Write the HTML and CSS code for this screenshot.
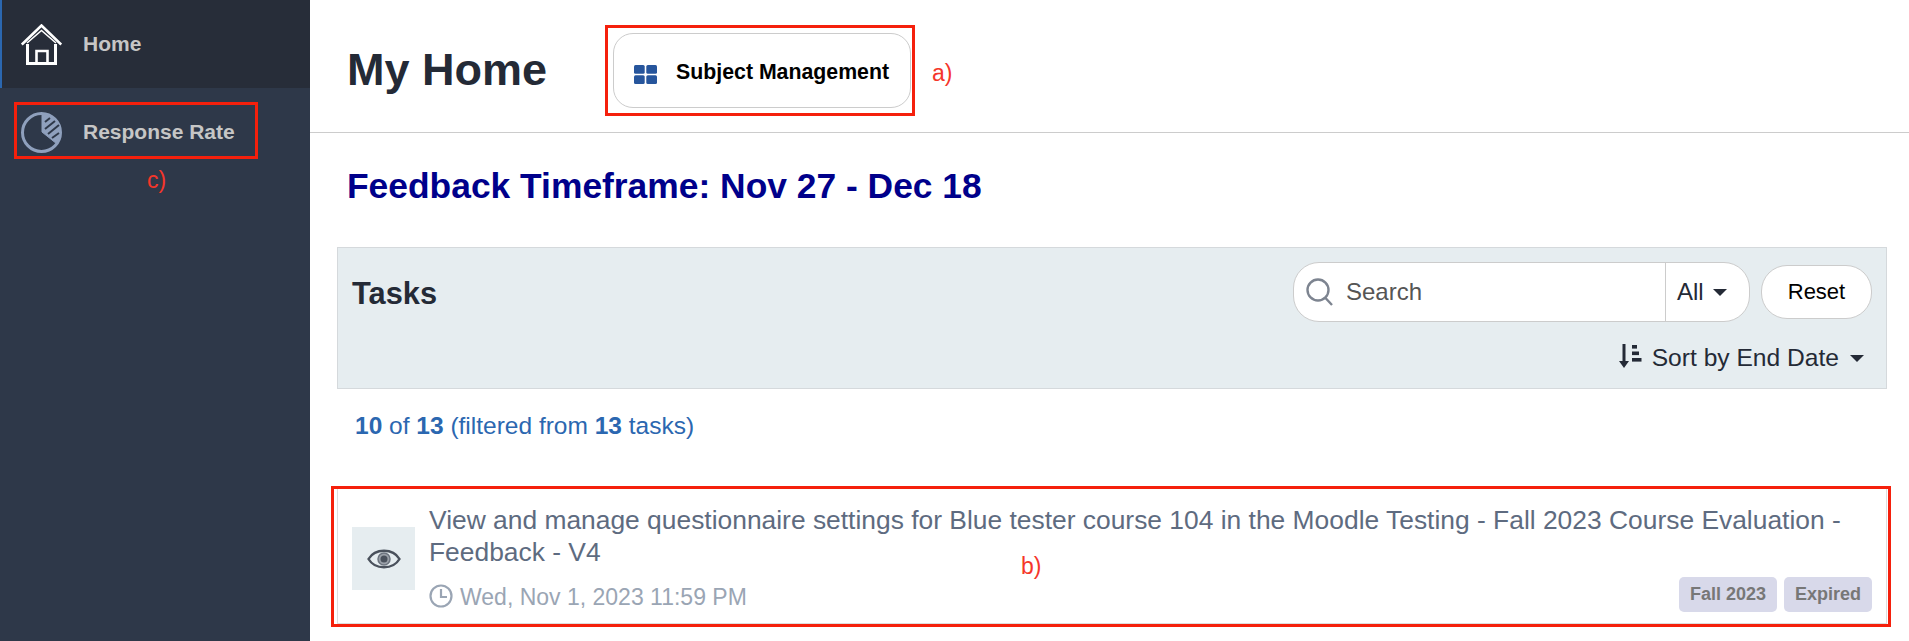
FILE: index.html
```html
<!DOCTYPE html>
<html lang="en">
<head>
    <meta charset="UTF-8">
    <meta name="viewport" content="width=device-width, initial-scale=1.0">
    <title>My Home</title>
    <link rel="stylesheet" href="styles.css">
</head>
<body>
    <aside class="sidebar">
        <a class="nav-item active">
            <svg class="nav-icon" viewBox="0 0 41 41" fill="none" stroke="#fff">
                <path d="M0.8 20.5 L20.5 1.5 L40.2 20.5" stroke-width="2.6"/>
                <path d="M6 19 L20.5 6.5 L35 19" stroke-width="1.6"/>
                <path d="M6.5 20 V39.5 H34.5 V20" stroke-width="3"/>
                <path d="M15.5 39.5 V27 H26.5 V39.5" stroke-width="2.6"/>
            </svg>
            <span>Home</span>
        </a>
        <a class="nav-item">
            <svg class="nav-icon" viewBox="0 0 41 41" fill="none" stroke="#8fa0bd" stroke-width="3">
                <circle cx="20.5" cy="20.5" r="19"/>
                <path d="M21 2 L21 20 L36 32 A19 19 0 0 0 21 2 Z" fill="#8fa0bd" stroke-width="1"/>
                <path d="M24 10 L29 6 M24 17 L34 9 M27 22 L38 13 M31 26 L38 21" stroke="#2e3849" stroke-width="2"/>
            </svg>
            <span>Response Rate</span>
        </a>
    </aside>

    <main class="content">
        <header class="page-header">
            <h1>My Home</h1>
            <button class="subject-btn">
                <svg class="grid-icon" viewBox="0 0 23 19" fill="#26559c">
                    <rect x="0" y="0" width="10.7" height="8.7" rx="1.5"/>
                    <rect x="12.3" y="0" width="10.7" height="8.7" rx="1.5"/>
                    <rect x="0" y="10.3" width="10.7" height="8.7" rx="1.5"/>
                    <rect x="12.3" y="10.3" width="10.7" height="8.7" rx="1.5"/>
                </svg>
                Subject Management
            </button>
        </header>

        <h2 class="timeframe">Feedback Timeframe: Nov 27 - Dec 18</h2>

        <section class="toolbar">
            <div class="toolbar-top">
                <h3>Tasks</h3>
                <div class="toolbar-controls">
                    <div class="search-box">
                        <svg class="search-icon" viewBox="0 0 30 30" fill="none" stroke="#7d8490" stroke-width="2.4">
                            <circle cx="13" cy="13" r="10.5"/>
                            <path d="M20.5 21 L27 28"/>
                        </svg>
                        <span class="search-text">Search</span>
                        <div class="search-filter">All <i class="caret"></i></div>
                    </div>
                    <button class="reset-btn">Reset</button>
                </div>
            </div>
            <div class="sort-row">
                <svg class="sort-icon" viewBox="0 0 24 24" fill="#242a36">
                    <path d="M4.5 0 H7.5 V17 H11 L6 24 L1 17 H4.5 Z"/>
                    <rect x="14" y="1" width="5" height="3.6"/>
                    <rect x="14" y="7.5" width="7" height="3.6"/>
                    <rect x="14" y="14" width="9.5" height="3.6"/>
                </svg>
                <span>Sort by End Date</span>
                <i class="caret"></i>
            </div>
        </section>

        <p class="task-count"><b>10</b> of <b>13</b> (filtered from <b>13</b> tasks)</p>

        <article class="task-card">
            <div class="task-thumb">
                <svg class="eye-icon" viewBox="0 0 34 24" fill="none" stroke="#4a515c" stroke-width="2.4">
                    <path d="M1.5 12 C8 1 26 1 32.5 12 C26 23 8 23 1.5 12 Z"/>
                    <circle cx="17" cy="12" r="6" fill="#9aa0a8" stroke="#6d747f" stroke-width="1.5"/>
                    <circle cx="17" cy="12" r="3.5" fill="#4a515c" stroke="none"/>
                </svg>
            </div>
            <div class="task-body">
                <div class="task-title">View and manage questionnaire settings for Blue tester course 104 in the Moodle Testing - Fall 2023 Course Evaluation - Feedback - V4</div>
                <div class="task-meta">
                    <div class="task-date">
                        <svg class="clock-icon" viewBox="0 0 24 24" fill="none" stroke="#9aa5b4" stroke-width="2.2">
                            <circle cx="12" cy="12" r="10.5"/>
                            <path d="M12 5 V13 H18"/>
                        </svg>
                        Wed, Nov 1, 2023 11:59 PM
                    </div>
                    <div class="task-tags">
                        <span class="tag">Fall 2023</span>
                        <span class="tag">Expired</span>
                    </div>
                </div>
            </div>
        </article>
    </main>

    <!-- red review marks drawn on top of the page -->
    <div class="mark mark-a"></div>
    <div class="mark mark-b"></div>
    <div class="mark mark-c"></div>
    <span class="mark-label label-a">a)</span>
    <span class="mark-label label-b">b)</span>
    <span class="mark-label label-c">c)</span>
</body>
</html>
```

FILE: styles.css
```css
* {
    box-sizing: border-box;
}
html, body {
    height: 100%;
}
body {
    margin: 0;
    display: flex;
    position: relative;
    overflow: hidden;
    font-family: "Liberation Sans", Arial, sans-serif;
    background: #fff;
    color: #242a36;
}
.sidebar {
    width: 310px;
    flex: 0 0 310px;
    background: #2e3849;
}
.nav-item {
    display: flex;
    align-items: center;
    height: 88px;
    padding-left: 21px;
    gap: 21px;
    color: #c6c6c6;
    font-size: 21px;
    font-weight: 700;
}
.nav-item.active {
    background: #272d39;
    border-left: 2px solid #2b67b0;
    padding-left: 19px;
}
.nav-icon {
    width: 41px;
    height: 41px;
}
.content {
    flex: 1;
    min-width: 0;
}
.page-header {
    display: flex;
    align-items: flex-start;
    height: 133px;
    padding: 33px 0 0 37px;
    border-bottom: 1px solid #ccc;
}
.page-header h1 {
    margin: 0;
    font-size: 45px;
    line-height: 73px;
}
.subject-btn {
    display: flex;
    align-items: center;
    gap: 19px;
    width: 298px;
    height: 75px;
    margin-left: 66px;
    padding: 4px 0 0 20px;
    background: #fff;
    border: 1px solid #ccc;
    border-radius: 20px;
    color: #000;
    font: 700 21.3px "Liberation Sans", Arial, sans-serif;
}
.grid-icon {
    width: 23px;
    height: 19px;
    margin-top: 4px;
}
.timeframe {
    margin: 33px 0 41px 37px;
    color: #00008b;
    font-size: 35.4px;
    line-height: 40px;
}
.toolbar {
    margin: 0 22px 0 27px;
    height: 142px;
    padding: 14px 14px 0;
    background: #e6edf0;
    border: 1px solid #d5d9dc;
}
.toolbar-top {
    display: flex;
    justify-content: space-between;
    align-items: center;
    height: 60px;
}
.toolbar-top h3 {
    margin: 4px 0 0;
    font-size: 30.8px;
}
.toolbar-controls {
    display: flex;
    align-items: center;
    gap: 11px;
}
.search-box {
    display: flex;
    align-items: center;
    width: 457px;
    height: 60px;
    padding-left: 11px;
    background: #fff;
    border: 1px solid #ccc;
    border-radius: 26px;
    font-size: 24px;
}
.search-icon {
    width: 30px;
    height: 30px;
}
.search-text {
    margin-left: 11px;
    flex: 1;
    color: #555;
}
.search-filter {
    display: flex;
    align-items: center;
    gap: 9px;
    width: 84px;
    height: 100%;
    padding-left: 11px;
    border-left: 1px solid #ccc;
}
.caret {
    width: 0;
    height: 0;
    border-left: 7px solid transparent;
    border-right: 7px solid transparent;
    border-top: 7px solid #242a36;
}
.reset-btn {
    width: 111px;
    height: 54px;
    background: #fff;
    border: 1px solid #ccc;
    border-radius: 26px;
    color: #000;
    font: 22px "Liberation Sans", Arial, sans-serif;
}
.sort-row {
    display: flex;
    align-items: center;
    justify-content: flex-end;
    height: 30px;
    margin-top: 21px;
    padding-right: 8px;
    font-size: 24.6px;
}
.sort-icon {
    width: 24px;
    height: 24px;
    margin-right: 10px;
    margin-top: -5px;
}
.sort-row .caret {
    margin-left: 11px;
}
.task-count {
    margin: 0 0 0 45px;
    padding: 24px 0 0;
    height: 99px;
    color: #2b67b0;
    font-size: 24.5px;
    line-height: 26px;
}
.task-card {
    display: flex;
    align-items: flex-start;
    gap: 14px;
    margin: 0 22px 0 27px;
    height: 136px;
    padding: 15px 14px 0;
    background: #fff;
    border: 1px solid #ddd;
}
.task-thumb {
    display: flex;
    align-items: center;
    justify-content: center;
    flex: 0 0 63px;
    height: 63px;
    margin-top: 23px;
    background: #e6edf0;
}
.eye-icon {
    width: 34px;
    height: 24px;
}
.task-body {
    flex: 1;
    min-width: 0;
}
.task-title {
    color: #5e6b80;
    font-size: 26.4px;
    line-height: 32px;
}
.task-meta {
    display: flex;
    justify-content: space-between;
    align-items: center;
    height: 35px;
    margin-top: 9px;
}
.task-date {
    display: flex;
    align-items: center;
    gap: 7px;
    padding-top: 6px;
    color: #9aa5b4;
    font-size: 23px;
}
.clock-icon {
    width: 24px;
    height: 24px;
    margin-top: -3px;
}
.task-tags {
    display: flex;
    gap: 7px;
}
.tag {
    height: 35px;
    padding: 0 11px;
    background: #d8d9ea;
    border-radius: 5px;
    color: #777;
    font-size: 18px;
    font-weight: 700;
    line-height: 35px;
}
.mark {
    position: absolute;
    border: 3px solid #f5200c;
}
.mark-a {
    left: 605px;
    top: 25px;
    width: 310px;
    height: 91px;
}
.mark-b {
    left: 331px;
    top: 486px;
    width: 1560px;
    height: 141px;
}
.mark-c {
    left: 14px;
    top: 102px;
    width: 244px;
    height: 57px;
}
.mark-label {
    position: absolute;
    color: #f5362a;
    font-size: 23px;
    line-height: 26px;
}
.label-a {
    left: 932px;
    top: 60px;
}
.label-b {
    left: 1021px;
    top: 553px;
}
.label-c {
    left: 147px;
    top: 167px;
}
```
